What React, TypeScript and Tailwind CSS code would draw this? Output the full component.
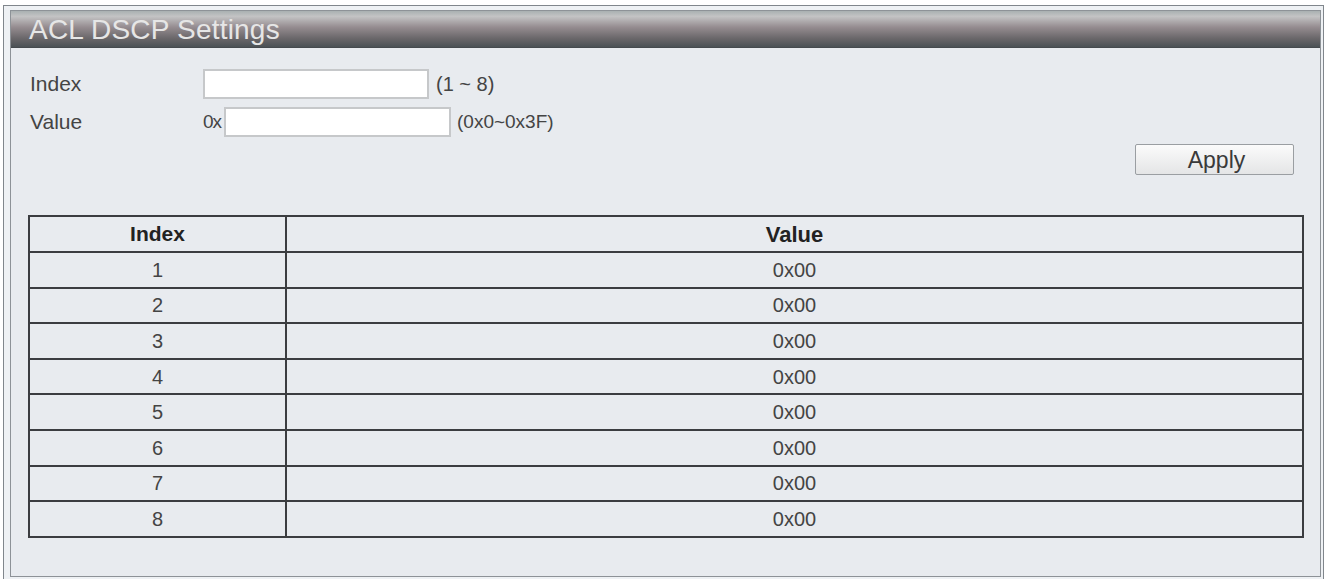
const ROWS = [1, 2, 3, 4, 5, 6, 7, 8].map((i) => ({ index: i, value: '0x00' }))

export default function App() {
  return (
    <div className="w-[1326px] h-[579px] bg-white pt-[5px] pl-[3px] pr-[2px] overflow-hidden font-['Liberation_Sans',Arial,sans-serif] text-[#444]">
      {/* outer frame */}
      <div className="h-[576px] border border-[#80868c] bg-[#eef1f4] pt-[4px] pl-[6px] pr-[2px]">
        {/* panel */}
        <div className="h-[567px] border border-[#8d9297] bg-[#e8ebef] flex flex-col">
          {/* title bar */}
          <div className="h-[37px] flex items-center pl-[18px] bg-[linear-gradient(to_bottom,#a9b0b1_0%,#c3c3c4_15%,#958c90_45%,#6b686b_75%,#4b5155_100%)] border-b border-[#454a4e]">
            <span className="text-[28px] leading-none text-[#e6e6e6] tracking-[0.2px] pt-[1px]">ACL DSCP Settings</span>
          </div>

          {/* form */}
          <div className="pt-[21px] pl-[19px] pr-[26px] text-[21px]">
            <div className="flex items-center h-[30px]">
              <span className="w-[173px]">Index</span>
              <div className="w-[226px] h-[30px] bg-white border-2 border-[#c6c8ca]" />
              <span className="ml-[7px] text-[20px]">(1 ~ 8)</span>
            </div>
            <div className="flex items-center h-[30px] mt-[8px]">
              <span className="w-[173px]">Value</span>
              <span className="w-[21px] text-[19px] tracking-[-1px]">0x</span>
              <div className="w-[227px] h-[30px] bg-white border-2 border-[#c6c8ca]" />
              <span className="ml-[6px] text-[19px]">(0x0~0x3F)</span>
            </div>
            <div className="flex justify-end mt-[7px]">
              <button className="w-[159px] h-[31px] border border-[#9a9ea2] rounded-[2px] bg-[linear-gradient(to_bottom,#fbfbfb,#e4e5e6)] text-[23px] leading-none text-[#3a3a3a] pl-[4px] pt-[1px]">
                Apply
              </button>
            </div>
          </div>

          {/* table */}
          <div className="pl-[17px] pr-[16px] mt-[40px]">
            <table className="w-full border-collapse border-2 border-[#3b3d40] text-[20px]">
              <thead>
                <tr className="h-[36px]">
                  <th className="w-[257px] border-2 border-[#3b3d40] font-bold text-[21px] text-[#222]">Index</th>
                  <th className="border-2 border-[#3b3d40] font-bold text-[22px] text-[#222]">Value</th>
                </tr>
              </thead>
              <tbody>
                {ROWS.map((row) => (
                  <tr key={row.index} className="h-[35.6px]">
                    <td className="border-2 border-[#3b3d40] text-center leading-none">{row.index}</td>
                    <td className="border-2 border-[#3b3d40] text-center leading-none">{row.value}</td>
                  </tr>
                ))}
              </tbody>
            </table>
          </div>
        </div>
      </div>
    </div>
  )
}
